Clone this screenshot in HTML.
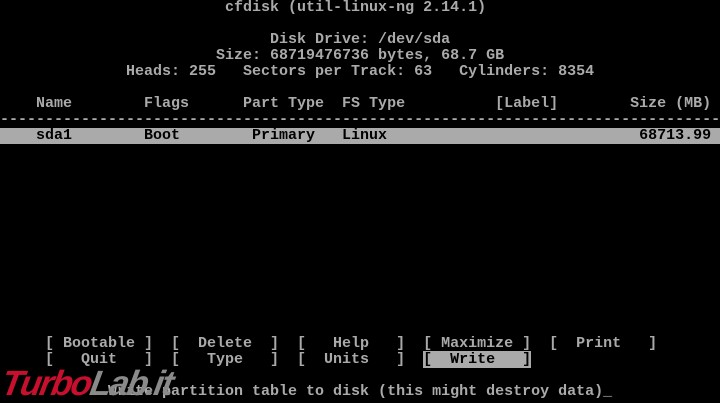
<!DOCTYPE html>
<html><head><style>
body{margin:0;background:#000;width:720px;height:400px;overflow:hidden;position:relative}
pre{margin:0;font-family:"Liberation Mono",monospace;font-size:15px;line-height:16px;color:#aaa;font-weight:bold;white-space:pre}
.h{background:#aaa;color:#000}
.hr{display:inline-block;width:720px}
.logo{position:absolute;left:2px;top:366px;font-family:"Liberation Sans",sans-serif;font-weight:bold;font-style:italic;font-size:35px;line-height:35px;letter-spacing:-2px;transform:skewX(-10deg)}
.r{color:#c8102e}.g{color:#8a8a8a}
</style></head><body>
<pre>                         cfdisk (util-linux-ng 2.14.1)

                              Disk Drive: /dev/sda
                        Size: 68719476736 bytes, 68.7 GB
              Heads: 255   Sectors per Track: 63   Cylinders: 8354

    Name        Flags      Part Type  FS Type          [Label]        Size (MB)
--------------------------------------------------------------------------------
<span class="h hr">    sda1        Boot        Primary   Linux                            68713.99</span>












     [ Bootable ]  [  Delete  ]  [   Help   ]  [ Maximize ]  [  Print   ]
     [   Quit   ]  [   Type   ]  [  Units   ]  <span class="h">[  Write   ]</span>

            Write partition table to disk (this might destroy data)_</pre>
<div class="logo"><span class="r">Turbo</span><span class="g">Lab.it</span></div>
</body></html>
